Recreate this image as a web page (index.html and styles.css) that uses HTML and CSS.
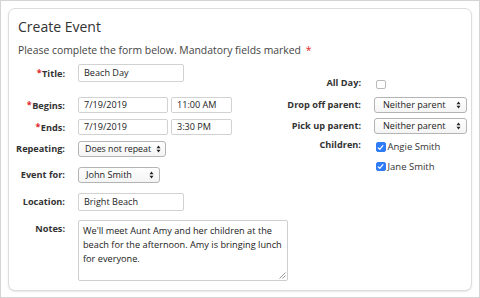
FILE: index.html
```html
<!DOCTYPE html>
<html lang="en">
<head>
<meta charset="utf-8">
<title>Create Event</title>
<link rel="stylesheet" href="styles.css">
</head>
<body>
<div class="frame">
  <div class="card">
    <h1 class="title">Create Event</h1>
    <p class="intro">Please complete the form below. Mandatory fields marked <span class="star">*</span></p>
    <div class="form">
      <div class="col-left">
        <div class="row r-title">
          <label class="lbl"><span class="req">*</span>Title:</label>
          <div class="field w-title">Beach Day</div>
        </div>
        <div class="row r-begins">
          <label class="lbl"><span class="req">*</span>Begins:</label>
          <div class="pair">
            <div class="field sm w-date">7/19/2019</div>
            <div class="field sm w-time">11:00 AM</div>
          </div>
        </div>
        <div class="row r-ends">
          <label class="lbl"><span class="req">*</span>Ends:</label>
          <div class="pair">
            <div class="field sm w-date">7/19/2019</div>
            <div class="field sm w-time">3:30 PM</div>
          </div>
        </div>
        <div class="row r-repeat">
          <label class="lbl">Repeating:</label>
          <div class="select w-repeat"><span>Does not repeat</span><svg class="arrows" width="5" height="8" viewBox="0 0 5 8"><path d="M0.5 3.2 L2.5 0.6 L4.5 3.2 Z M0.5 4.8 L2.5 7.4 L4.5 4.8 Z" fill="#222"/></svg></div>
        </div>
        <div class="row r-for">
          <label class="lbl">Event for:</label>
          <div class="select w-for"><span>John Smith</span><svg class="arrows" width="5" height="8" viewBox="0 0 5 8"><path d="M0.5 3.2 L2.5 0.6 L4.5 3.2 Z M0.5 4.8 L2.5 7.4 L4.5 4.8 Z" fill="#222"/></svg></div>
        </div>
        <div class="row r-loc">
          <label class="lbl">Location:</label>
          <div class="field w-title">Bright Beach</div>
        </div>
        <div class="row r-notes">
          <label class="lbl">Notes:</label>
          <div class="textarea">
            <div>We'll meet Aunt Amy and her children at the</div>
            <div>beach for the afternoon. Amy is bringing lunch</div>
            <div>for everyone.</div>
            <svg class="grip" width="7" height="7" viewBox="0 0 7 7"><path d="M0.5 6.5 L6.5 0.5 M3.5 6.5 L6.5 3.5" stroke="#8a8a8a" stroke-width="0.9"/></svg>
          </div>
        </div>
      </div>
      <div class="col-right">
        <div class="row r-allday">
          <label class="lbl">All Day:</label>
          <div class="checks"><span class="box"></span></div>
        </div>
        <div class="row r-drop">
          <label class="lbl">Drop off parent:</label>
          <div class="select w-parent"><span>Neither parent</span><svg class="arrows" width="5" height="8" viewBox="0 0 5 8"><path d="M0.5 3.2 L2.5 0.6 L4.5 3.2 Z M0.5 4.8 L2.5 7.4 L4.5 4.8 Z" fill="#222"/></svg></div>
        </div>
        <div class="row r-pick">
          <label class="lbl">Pick up parent:</label>
          <div class="select w-parent"><span>Neither parent</span><svg class="arrows" width="5" height="8" viewBox="0 0 5 8"><path d="M0.5 3.2 L2.5 0.6 L4.5 3.2 Z M0.5 4.8 L2.5 7.4 L4.5 4.8 Z" fill="#222"/></svg></div>
        </div>
        <div class="row r-children">
          <label class="lbl">Children:</label>
          <div class="checklist">
            <div class="check"><span class="box on"><svg width="9" height="9" viewBox="0 0 9 9"><path d="M2.2 4.8 L3.8 6.4 L6.9 2.6" fill="none" stroke="#fff" stroke-width="1.2" stroke-linecap="round" stroke-linejoin="round"/></svg></span><span class="ctext">Angie Smith</span></div>
            <div class="check"><span class="box on"><svg width="9" height="9" viewBox="0 0 9 9"><path d="M2.2 4.8 L3.8 6.4 L6.9 2.6" fill="none" stroke="#fff" stroke-width="1.2" stroke-linecap="round" stroke-linejoin="round"/></svg></span><span class="ctext">Jane Smith</span></div>
          </div>
        </div>
      </div>
    </div>
  </div>
</div>
</body>
</html>
```

FILE: styles.css
```css
* { box-sizing: border-box; }
html, body { margin: 0; padding: 0; background: #fff; }
body {
  font-family: "Open Sans", "Liberation Sans", sans-serif;
  color: #333;
}
.frame {
  width: 480px;
  height: 298px;
  border: 1px solid #d4d4d4;
  padding: 7px;
  background: #fff;
}
.card {
  height: 283px;
  border: 1px solid #dcdcdc;
  border-radius: 7px;
  box-shadow: 0 1px 2px rgba(0,0,0,0.10);
  padding: 8px 4px 0 4px;
  background: #fff;
}
.title {
  margin: 0 0 0 5px;
  font-size: 14px;
  line-height: 20px;
  font-weight: 400;
  color: #333;
}
.intro {
  margin: 5px 0 0 5px;
  font-size: 10.4px;
  line-height: 16px;
  color: #444;
}
.star { color: #e0262a; margin-left: 2px; }
.form {
  display: grid;
  grid-template-columns: 270px 1fr;
  margin-top: 6px;
}
.row {
  display: grid;
  column-gap: 13px;
  align-items: center;
}
.col-left .row { grid-template-columns: 52px 1fr; }
.col-right .row { grid-template-columns: 1fr 93px; }
.lbl {
  font-size: 9.2px;
  font-weight: 700;
  text-align: right;
  white-space: nowrap;
  color: #333;
  line-height: 12px;
}
.req { color: #e0262a; font-size: 9px; vertical-align: 1px; margin-right: 0.5px; }

.r-begins { margin-top: 15px; }
.r-ends { margin-top: 6px; }
.r-repeat { margin-top: 6px; }
.r-for { margin-top: 10px; }
.r-loc { margin-top: 10px; }
.r-notes { margin-top: 9px; align-items: start; }
.r-notes .lbl { margin-top: 3px; }

.field {
  height: 18px;
  border: 1px solid #d2d2d2;
  border-radius: 2px;
  padding: 0 5px;
  font-size: 9.1px;
  line-height: 16px;
  color: #222;
  background: #fff;
  white-space: nowrap;
}
.field.sm { height: 16px; line-height: 14px; }
.w-title { width: 106px; }
.pair { display: flex; gap: 3px; }
.w-date { width: 90px; }
.w-time { width: 61px; }

.select {
  height: 16px;
  border: 1px solid #b4b4b4;
  border-radius: 3px;
  background: linear-gradient(#ffffff, #f4f4f4);
  padding: 0 5px 0 8px;
  font-size: 9.1px;
  line-height: 14px;
  color: #222;
  display: flex;
  align-items: center;
  justify-content: space-between;
  white-space: nowrap;
}
.w-repeat { width: 88px; padding-left: 6px; padding-right: 4px; font-size: 8.8px; }
.w-for { width: 82px; padding-left: 7px; }
.w-parent { width: 93px; }
.arrows { flex: none; }

.textarea {
  position: relative;
  width: 210px;
  height: 61px;
  border: 1px solid #cfcfcf;
  border-radius: 2px;
  padding: 3px 4px;
  font-size: 9.2px;
  line-height: 13.8px;
  color: #222;
  white-space: nowrap;
}
.grip { position: absolute; right: 1px; bottom: 1px; }

.col-right { padding-top: 13px; }
.r-allday { align-items: end; }
.r-allday .checks { display: flex; padding-left: 2px; }
.r-drop { margin-top: 8px; }
.r-pick { margin-top: 5px; }
.r-children { margin-top: 5px; align-items: start; }
.checklist { display: flex; flex-direction: column; gap: 9.5px; padding-left: 2px; padding-top: 3px; }
.check { display: flex; align-items: center; gap: 2px; height: 10px; }
.box {
  flex: none;
  display: inline-flex;
  align-items: center;
  justify-content: center;
  width: 9.5px;
  height: 9.5px;
  border: 1px solid #b9b9b9;
  border-radius: 2px;
  background: #fff;
}
.box.on { background: #2f7cf6; border-color: #2f7cf6; }
.box.on svg { flex: none; }
.ctext { font-size: 9.5px; color: #333; line-height: 12px; }
```
